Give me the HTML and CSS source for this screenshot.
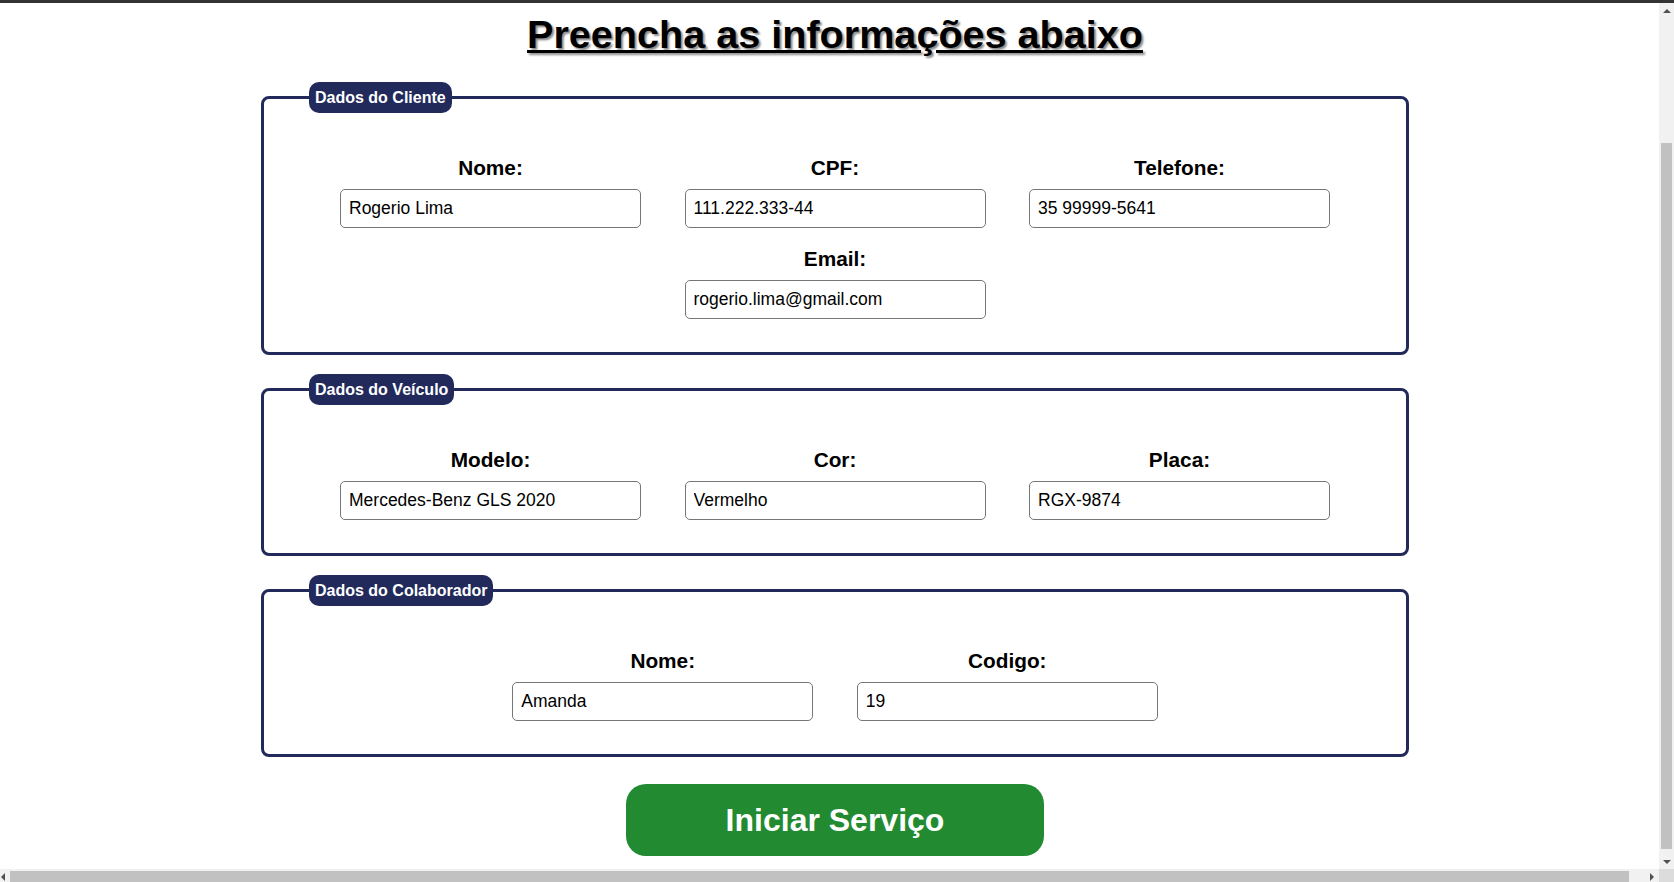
FILE: index.html
```html
<!DOCTYPE html>
<html lang="pt-BR">
<head>
<meta charset="utf-8">
<title>Iniciar Serviço</title>
<link rel="stylesheet" href="styles.css">
</head>
<body>
<div class="topline"></div>
<div class="window">
  <div class="viewport">
    <main class="page">
      <h1 class="title">Preencha as informações abaixo</h1>
      <form class="form">
        <fieldset class="group">
          <legend class="group-title">Dados do Cliente</legend>
          <div class="fields">
            <div class="field"><label class="field-label">Nome:</label><input class="field-input" type="text" value="Rogerio Lima"></div>
            <div class="field"><label class="field-label">CPF:</label><input class="field-input" type="text" value="111.222.333-44"></div>
            <div class="field"><label class="field-label">Telefone:</label><input class="field-input" type="text" value="35 99999-5641"></div>
            <div class="field"><label class="field-label">Email:</label><input class="field-input" type="text" value="rogerio.lima@gmail.com"></div>
          </div>
        </fieldset>
        <fieldset class="group">
          <legend class="group-title">Dados do Veículo</legend>
          <div class="fields">
            <div class="field"><label class="field-label">Modelo:</label><input class="field-input" type="text" value="Mercedes-Benz GLS 2020"></div>
            <div class="field"><label class="field-label">Cor:</label><input class="field-input" type="text" value="Vermelho"></div>
            <div class="field"><label class="field-label">Placa:</label><input class="field-input" type="text" value="RGX-9874"></div>
          </div>
        </fieldset>
        <fieldset class="group">
          <legend class="group-title">Dados do Colaborador</legend>
          <div class="fields">
            <div class="field"><label class="field-label">Nome:</label><input class="field-input" type="text" value="Amanda"></div>
            <div class="field"><label class="field-label">Codigo:</label><input class="field-input" type="text" value="19"></div>
          </div>
        </fieldset>
        <button class="submit" type="button">Iniciar Serviço</button>
      </form>
    </main>
  </div>
  <div class="vbar" aria-hidden="true">
    <div class="sb-btn"><span class="arrow arrow-up"></span></div>
    <div class="vtrack"><div class="vthumb"></div></div>
    <div class="sb-btn"><span class="arrow arrow-down"></span></div>
  </div>
  <div class="hbar" aria-hidden="true">
    <div class="sb-btn"><span class="arrow arrow-left"></span></div>
    <div class="htrack"><div class="hthumb"></div></div>
    <div class="sb-btn"><span class="arrow arrow-right"></span></div>
  </div>
  <div class="corner"></div>
</div>
</body>
</html>
```

FILE: styles.css
```css
html, body {
  margin: 0;
  height: 100%;
  overflow: hidden;
}

body {
  font-family: "Liberation Sans", Arial, sans-serif;
  background: #ffffff;
  color: #000000;
}

.topline {
  height: 3px;
  background: #333333;
}

/* frame with content area + scrollbars */
.window {
  height: calc(100vh - 1px);
  margin-left: -5px;
  display: grid;
  grid-template-columns: 1fr 15px;
  grid-template-rows: 1fr 15px;
}

.viewport {
  min-width: 0;
  min-height: 0;
  overflow: hidden;
  display: flex;
  flex-direction: column;
  justify-content: flex-end;
}

/* scrollbars */
.vbar,
.hbar {
  display: flex;
  background: #f1f1f1;
}

.vbar {
  flex-direction: column;
}

.sb-btn {
  flex: none;
  width: 15px;
  height: 15px;
  display: flex;
  align-items: center;
  justify-content: center;
}

.arrow {
  width: 0;
  height: 0;
  border: 0 solid transparent;
}

.arrow-up {
  border-left-width: 4px;
  border-right-width: 4px;
  border-bottom: 4px solid #505050;
}

.arrow-down {
  border-left-width: 4px;
  border-right-width: 4px;
  border-top: 4px solid #505050;
}

.arrow-left {
  border-top-width: 4px;
  border-bottom-width: 4px;
  border-right: 4px solid #505050;
}

.arrow-right {
  border-top-width: 4px;
  border-bottom-width: 4px;
  border-left: 4px solid #505050;
}

.vtrack {
  flex: 1;
  display: flex;
  flex-direction: column;
  justify-content: flex-end;
}

.vthumb {
  height: 706px;
  margin: 0 2px 5px;
  background: #c1c1c1;
}

.htrack {
  flex: 1;
  display: flex;
  align-items: stretch;
}

.hthumb {
  width: 1619px;
  margin: 2px 0;
  background: #c1c1c1;
}

.corner {
  background: #dcdcdc;
}

/* page */
.page {
  flex: none;
  width: 1680px;
  box-sizing: border-box;
  padding: 0 0 13px;
}

.title {
  margin: 0;
  font-size: 39.6px;
  line-height: 46px;
  font-weight: bold;
  text-align: center;
  text-decoration: underline;
  text-shadow: 2px 2px 2px #8a8a8a;
}

.form {
  margin-top: 25.5px;
}

.group {
  width: 1148px;
  box-sizing: border-box;
  margin: 0 auto;
  padding: 43px 0 33px;
  border: 3px solid #212a5b;
  border-radius: 8px;
  min-inline-size: 0;
}

.group + .group {
  margin-top: 18.5px;
}

.group-title {
  margin-left: 45px;
  padding: 6px;
  background: #212a5b;
  color: #ffffff;
  font-size: 16px;
  line-height: 19px;
  font-weight: bold;
  border-radius: 10px;
}

.fields {
  display: flex;
  flex-wrap: wrap;
  justify-content: center;
  column-gap: 43.5px;
  row-gap: 18.4px;
}

.field {
  width: 301px;
  display: flex;
  flex-direction: column;
  align-items: center;
  gap: 9px;
}

.field-label {
  font-size: 20.8px;
  line-height: 24px;
  font-weight: bold;
}

.field-input {
  width: 301px;
  height: 39.4px;
  box-sizing: border-box;
  margin: 0;
  padding: 0 8px;
  border: 1px solid #767676;
  border-radius: 5px;
  font-family: "Liberation Sans", Arial, sans-serif;
  font-size: 17.5px;
  color: #000000;
  background: #ffffff;
}

.submit {
  display: block;
  width: 418px;
  height: 72px;
  margin: 27px auto 0;
  border: none;
  border-radius: 20px;
  background: #228b32;
  color: #ffffff;
  font-family: "Liberation Sans", Arial, sans-serif;
  font-size: 32px;
  font-weight: bold;
  cursor: pointer;
}
```
